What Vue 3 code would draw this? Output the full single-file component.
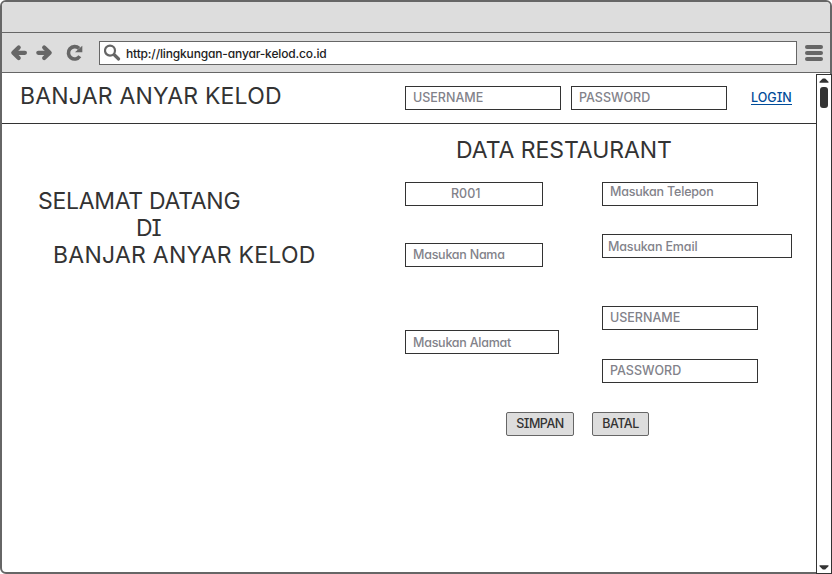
<script setup>
const welcome = [
  { text: 'SELAMAT DATANG', cls: 'w1' },
  { text: 'DI', cls: 'w2' },
  { text: 'BANJAR ANYAR KELOD', cls: 'w3' },
]
const leftFields = [
  { text: 'R001', cls: 'code' },
  { text: 'Masukan Nama', cls: 'nama' },
  { text: 'Masukan Alamat', cls: 'alamat' },
]
const rightFields = [
  { text: 'Masukan Telepon', cls: 'telepon' },
  { text: 'Masukan Email', cls: 'email' },
  { text: 'USERNAME', cls: 'user' },
  { text: 'PASSWORD', cls: 'pass' },
]
</script>

<template>
  <div class="window">
    <div class="titlebar"></div>
    <div class="toolbar">
      <svg class="nav" width="74" height="20" viewBox="0 0 74 20">
        <g fill="none" stroke="#666" stroke-width="4.2" stroke-linecap="round" stroke-linejoin="round">
          <path d="M8.700 4.500L3.300 9.800L8.700 15.100" />
          <path d="M4.500 9.800H14.900" />
          <path d="M34.200 4.500L39.700 9.800L34.200 15.100" />
          <path d="M38 9.800H28.300" />
        </g>
        <path d="M69.800 13.300A6.200 6.200 0 1 1 69 5.400" fill="none" stroke="#666" stroke-width="3.600" />
        <path d="M72.300 2.800V9.300H65L68 6.500Z" fill="#666" />
      </svg>
      <div class="address">
        <svg width="18" height="18" viewBox="0 0 18 18">
          <circle cx="6" cy="6.600" r="5" fill="none" stroke="#666" stroke-width="2.200" />
          <path d="M10.500 11L14.600 15" stroke="#666" stroke-width="3.200" stroke-linecap="round" />
        </svg>
        <span class="url">http://lingkungan-anyar-kelod.co.id</span>
      </div>
      <div class="menu"><i></i><i></i><i></i></div>
    </div>
    <div class="viewport">
      <div class="page">
        <header>
          <h1>BANJAR ANYAR KELOD</h1>
          <div class="field user">USERNAME</div>
          <div class="field pass">PASSWORD</div>
          <a class="login">LOGIN</a>
        </header>
        <main>
          <section class="welcome">
            <div v-for="w in welcome" :key="w.cls" :class="w.cls">{{ w.text }}</div>
          </section>
          <section class="form">
            <h2>DATA RESTAURANT</h2>
            <div class="columns">
              <div class="col left">
                <div v-for="f in leftFields" :key="f.cls" class="field" :class="f.cls">{{ f.text }}</div>
              </div>
              <div class="col">
                <div v-for="f in rightFields" :key="f.cls" class="field" :class="f.cls">{{ f.text }}</div>
              </div>
            </div>
            <div class="actions">
              <button class="simpan">SIMPAN</button>
              <button class="batal">BATAL</button>
            </div>
          </section>
        </main>
      </div>
      <div class="scrollbar">
        <svg width="10" height="5" viewBox="0 0 10 5"><path d="M.5 4.800V3.800L3.800 .5H6.200L9.500 3.800V4.800Z" fill="#333" /></svg>
        <div class="thumb"></div>
        <svg class="down" width="10" height="5" viewBox="0 0 10 5"><path d="M.5 .2V1.200L3.800 4.500H6.200L9.500 1.200V.2Z" fill="#333" /></svg>
      </div>
    </div>
  </div>
</template>

<style>
body {
  background: #fff;
}
</style>

<style scoped>
* {
  box-sizing: border-box;
}
.window {
  width: 832px;
  height: 574px;
  border: 2px solid #666;
  border-radius: 6px;
  background: #fff;
  color: #333;
  font-family: Inter, Lato, sans-serif;
  font-feature-settings: 'cv11', 'cv08';
  font-size: 13px;
  white-space: nowrap;
  display: flex;
  flex-direction: column;
}
.titlebar {
  height: 31px;
  flex: none;
  background: #ddd;
  border-bottom: 1px solid #666;
  border-radius: 4px 4px 0 0;
}
.toolbar {
  height: 40px;
  flex: none;
  background: #ddd;
  border-bottom: 1px solid #666;
  display: flex;
  align-items: center;
  padding: 0 7px 0 8px;
}
.nav {
  margin-right: 15px;
}
.address {
  width: 698px;
  height: 24px;
  background: #fff;
  border: 1px solid #666;
  display: flex;
  align-items: center;
  padding: 0 4px;
  margin-top: 1px;
}
.url {
  margin-left: 4px;
  color: #222;
  font-size: 12px;
  font-weight: 500;
  letter-spacing: -0.15px;
}
.menu {
  width: 18px;
  margin-left: 8px;
  margin-top: 1px;
  display: grid;
  gap: 2px;
}
.menu i {
  height: 4px;
  border-radius: 2px;
  background: #666;
}
.viewport {
  flex: 1;
  display: flex;
  min-height: 0;
}
.page {
  width: 814px;
}
header {
  height: 51px;
  border-bottom: 1px solid #333;
  display: flex;
  align-items: flex-start;
}
h1,
h2 {
  margin: 0;
  font-weight: 400;
  font-size: 23px;
  line-height: 27px;
}
h1 {
  width: 385px;
  margin: 10px 0 0 18px;
  letter-spacing: 0.2px;
}
.field {
  height: 24px;
  border: 1px solid #333;
  padding-left: 7px;
  line-height: 21px;
  font-size: 12.5px;
  font-weight: 500;
  color: #82828a;
}
header .field {
  width: 156px;
  margin: 13px 10px 0 0;
}
.login {
  margin: 17px 0 0 14px;
  padding-top: 2px;
  line-height: 12px;
  font-size: 12.5px;
  font-weight: 500;
  color: #004c99;
  border-bottom: 1px solid #004c99;
}
main {
  display: flex;
}
.welcome {
  width: 403px;
  padding: 64px 0 0 36px;
  font-size: 23px;
  line-height: 27px;
}
.w1 {
  letter-spacing: -0.3px;
}
.w2 {
  padding-left: 98px;
  letter-spacing: -1px;
}
.w3 {
  padding-left: 15px;
  letter-spacing: 0.25px;
}
.form h2 {
  margin: 13px 0 18px 51px;
  letter-spacing: -0.05px;
}
.columns {
  display: flex;
}
.left {
  width: 197px;
}
.col .user,
.telepon {
  width: 156px;
}
.col .pass {
  width: 156px;
  margin-top: 29px;
}
.col .user {
  margin-top: 48px;
}
.field.telepon {
  line-height: 17px;
  letter-spacing: -0.2px;
}
.field.email {
  width: 190px;
  margin-top: 28px;
  padding-left: 5px;
  line-height: 23px;
  letter-spacing: -0.15px;
}
.field.code {
  width: 138px;
  padding-left: 45px;
}
.field.nama {
  width: 138px;
  margin-top: 37px;
  letter-spacing: -0.25px;
}
.field.alamat {
  width: 154px;
  margin-top: 63px;
  line-height: 23px;
  letter-spacing: -0.25px;
}
.actions {
  display: flex;
  gap: 18px;
  padding: 29px 0 0 101px;
}
button {
  height: 24px;
  padding: 0;
  border: 1px solid #666;
  border-radius: 2px;
  background: #ddd;
  color: #333;
  font: 500 12.5px/22px Inter, Lato, sans-serif;
  font-feature-settings: 'cv11', 'cv08';
  letter-spacing: -0.5px;
}
.simpan {
  width: 68px;
}
.batal {
  width: 57px;
}
.scrollbar {
  flex: none;
  width: 16px;
  height: 500px;
  margin: 1px -2px 0 0;
  background: #fff;
  border: 1px solid #333;
  display: flex;
  flex-direction: column;
  align-items: center;
  padding: 3px 0;
}
.scrollbar svg {
  flex: none;
}
.thumb {
  width: 8px;
  height: 21px;
  margin-top: 4px;
  border-radius: 3px;
  background: #333;
}
.down {
  margin-top: auto;
}
</style>
